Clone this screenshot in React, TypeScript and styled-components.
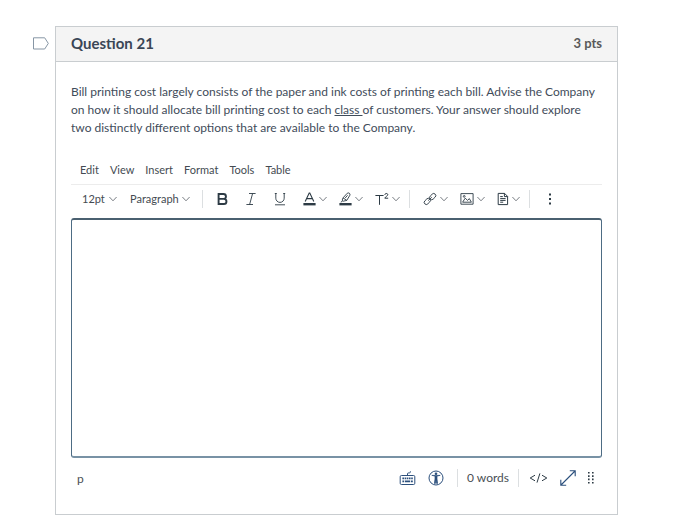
import React from "react";
import styled, { createGlobalStyle } from "styled-components";

const ink = "#2d3b45";
const blue = "#2b4f7c";
const line = "#c9cdd0";

const GlobalStyle = createGlobalStyle`
  *, *::before, *::after { box-sizing: border-box; }
  body {
    margin: 0;
    background: #fff;
    color: #3f4c5a;
    font-family: Lato, "Liberation Sans", sans-serif;
    font-size: 12px;
  }
  button, select, textarea { font: inherit; color: inherit; }
`;

const Page = styled.main`
  display: flex;
  align-items: flex-start;
  gap: 6px;
  padding: 26px 82px 8px 33px;
`;

const FlagButton = styled.button`
  display: flex;
  flex: none;
  margin: 11px 0 0;
  padding: 0;
  border: 0;
  background: none;
`;

const Card = styled.section`
  flex: 1;
  min-width: 0;
  border: 1px solid ${line};
`;

const CardHeader = styled.header`
  display: flex;
  align-items: center;
  justify-content: space-between;
  height: 35px;
  padding: 0 15px 2px;
  background: #f4f4f4;
  border-bottom: 1px solid ${line};
`;

const Title = styled.h2`
  margin: 0;
  font-size: 15px;
  line-height: 20px;
  font-weight: 700;
  color: #3a4656;
`;

const Points = styled.span`
  font-size: 13px;
  line-height: 20px;
  font-weight: 700;
  color: #595959;
`;

const CardBody = styled.div`
  padding: 21px 15px 19px;
`;

const Prompt = styled.p`
  margin: 0;
  line-height: 18px;
`;

const Editor = styled.div`
  margin-top: 22px;
`;

const MenuBar = styled.div`
  display: flex;
  align-items: center;
  gap: 11px;
  height: 26px;
  padding: 0 9px 4px;
  border-bottom: 1px solid #ececec;
`;

const MenuButton = styled.button`
  padding: 0;
  border: 0;
  background: none;
  font-size: 11px;
  line-height: 16px;
  color: #444b52;
`;

const Toolbar = styled.div`
  display: flex;
  align-items: center;
  height: 33px;
  padding: 0 0 5px 11px;
`;

const SelectField = styled.label<{ $width: number; $gap: number }>`
  display: grid;
  grid-template-columns: 1fr 8px;
  align-items: center;
  flex: none;
  width: ${(p) => p.$width}px;
  margin-right: ${(p) => p.$gap}px;
  color: #444b52;

  select {
    grid-area: 1 / 1 / 2 / 3;
    width: 100%;
    padding: 0;
    border: 0;
    background: none;
    appearance: none;
    font-size: 11px;
    line-height: 16px;
  }
  svg {
    grid-area: 1 / 2 / 2 / 3;
    pointer-events: none;
  }
`;

const Divider = styled.span`
  flex: none;
  width: 1px;
  height: 18px;
  background: #dcdfe1;
`;

const ToolGroup = styled.div<{ $gap: number; $before: number; $after: number }>`
  display: flex;
  align-items: center;
  gap: ${(p) => p.$gap}px;
  padding: 0 ${(p) => p.$after}px 0 ${(p) => p.$before}px;
`;

const ToolButton = styled.button`
  display: flex;
  align-items: center;
  gap: 3px;
  flex: none;
  padding: 0;
  border: 0;
  background: none;
  color: ${ink};
`;

const TextArea = styled.textarea`
  display: block;
  width: 100%;
  height: 240px;
  padding: 8px;
  border: 1px solid #4d6c84;
  border-top: 2px solid #4a6070;
  border-bottom: 2px solid #7892a5;
  border-radius: 3px;
  outline: none;
  resize: none;
  background: #fff;
`;

const StatusBar = styled.div`
  display: flex;
  align-items: center;
  justify-content: space-between;
  height: 34px;
  margin-top: 3px;
  padding: 0 8px 0 6px;
  color: #4a4f55;
`;

const StatusTools = styled.div`
  display: flex;
  align-items: center;
`;

const StatusButton = styled.button`
  display: flex;
  padding: 0;
  border: 0;
  background: none;
  color: ${blue};
`;

const WordCount = styled.button`
  padding: 0 9px;
  border: 0;
  background: none;
  line-height: 18px;
`;

const Chevron = () => (
  <svg width="8" height="6" viewBox="0 0 8 6" fill="none" stroke="#6b7177" strokeWidth="0.9" aria-hidden="true">
    <path d="M.4 1 4 4.8 7.6 1" />
  </svg>
);

const FlagIcon = () => (
  <svg width="16" height="13" viewBox="0 0 16 13" fill="none" stroke="#8796a5">
    <path d="M.5.8h11.2l3.6 5.6-3.6 5.6H.5z" />
  </svg>
);

const BoldIcon = () => (
  <svg width="11" height="14" viewBox="0 0 11 14" fill="none" stroke={ink} strokeWidth="1.9">
    <path d="M1.6 2h4.9a2.4 2.4 0 0 1 0 4.9H1.6M6.5 6.9h.4a2.5 2.5 0 0 1 0 5.1H1.6V1.1" />
  </svg>
);

const ItalicIcon = () => (
  <svg width="10" height="14" viewBox="0 0 10 14" fill="none" stroke={ink} strokeWidth="0.9">
    <path d="M3 1.5h6.6M.4 12.5H7M6.6 1.5l-3 11" />
  </svg>
);

const UnderlineIcon = () => (
  <svg width="12" height="14" viewBox="0 0 12 14" fill="none" stroke={ink} strokeWidth="0.9">
    <path d="M.8 1.5h2M9.2 1.5h2M1.8 1.5v4.7a4.2 4.2 0 0 0 8.4 0V1.5M1 12.8h10" />
  </svg>
);

const TextColorIcon = () => (
  <svg width="13" height="14" viewBox="0 0 13 14" fill="none" stroke={ink} strokeWidth="1.1">
    <path d="M2.2 9.6 6.2 1h.6l4 8.6M3.6 6.6h5.8" />
    <path d="M.4 11h12.2v2.4H.4z" fill={ink} stroke="none" />
  </svg>
);

const HighlightIcon = () => (
  <svg width="13" height="14" viewBox="0 0 13 14" fill="none" stroke={ink} strokeWidth="0.9">
    <path d="M4 5.9 8.2 1.3c1.2-1.1 3.5.2 2.7 1.9L7.8 8.4 4.2 9.2 3.2 8.2zM4 5.9l3.8 2.5M1.8 10.2l2-1.3M6 6.2l2.6-2.9" />
    <path d="M.4 11h12.2v2.4H.4z" fill={ink} stroke="none" />
  </svg>
);

const SuperscriptIcon = () => (
  <svg width="14" height="14" viewBox="0 0 14 14" fill="none" stroke={ink} strokeWidth="1">
    <path d="M.4 3.5h8.2M4.5 3.5v9.3" />
    <path d="M9.8 3c0-2 3-2 3-.3 0 1.2-2.6 2.1-3 3.5h3.4" />
  </svg>
);

const LinkIcon = () => (
  <svg width="14" height="14" viewBox="0 0 14 14" fill="none" stroke={ink} strokeWidth="0.9">
    <rect x="6.2" y="2.5" width="7" height="4.2" rx="2.1" transform="rotate(-45 9.7 4.6)" />
    <rect x=".8" y="7.3" width="7" height="4.2" rx="2.1" transform="rotate(-45 4.3 9.4)" />
    <path d="m5.2 8.6 3.6-3.4" />
  </svg>
);

const ImageIcon = () => (
  <svg width="14" height="14" viewBox="0 0 14 14" fill="none" stroke={ink} strokeWidth="0.9">
    <path d="M.9 1.6h12.2v10.6H.9z" />
    <path d="M2.6 10.2h8.8L9.3 6.6 7.6 8.4 5.2 6.2z" />
    <circle cx="4.2" cy="4.4" r=".9" />
  </svg>
);

const DocumentIcon = () => (
  <svg width="12" height="14" viewBox="0 0 12 14" fill="none" stroke={ink} strokeWidth="1">
    <path d="M1.2 1.4h6.4l3 3v8.2H1.2zM7.4 1.4v3.2h3.2M3.2 4.6h2.6M3.2 6.6h5.4M3.2 8.4h5.4M3.2 10.2h3" />
  </svg>
);

const MoreIcon = () => (
  <svg width="4" height="14" viewBox="0 0 4 14" fill={ink}>
    <path d="M1 1.6h2v2H1zM1 6h2v2H1zM1 10.4h2v2H1z" />
  </svg>
);

const KeyboardIcon = () => (
  <svg width="17" height="16" viewBox="0 0 17 16" fill="none" stroke={blue}>
    <rect x="1.2" y="5.5" width="14.6" height="9" rx="1.2" />
    <path d="M8.5 5.4V3.9c0-.7.4-1 1-1h1c.7 0 .9-.5.9-1.6" />
    <path d="M3.4 8.4h10.4" strokeWidth="1.7" strokeDasharray="1.6 .6" />
    <path d="M3.4 11.4h1.8M6 11.4h5M11.8 11.4h2" strokeWidth="1.7" />
  </svg>
);

const AccessibilityIcon = () => (
  <svg width="16" height="16" viewBox="0 0 16 16" fill="none" stroke={blue}>
    <circle cx="8" cy="8" r="7" />
    <circle cx="8" cy="3.8" r="1.3" fill={blue} stroke="none" />
    <path d="M3.8 5.4 7 6v3l-.6 4.4h1L8 10l.6 3.4h1L9 9V6l3.2-.6z" fill={blue} strokeWidth=".7" />
  </svg>
);

const CodeIcon = () => (
  <svg width="19" height="12" viewBox="0 0 19 12" fill="none" stroke={ink}>
    <path d="M6 3.2 1.2 6 6 8.8M13 3.2 17.8 6 13 8.8M10.9 1.4 8 10.6" />
  </svg>
);

const ExpandIcon = () => (
  <svg width="16" height="16" viewBox="0 0 16 16" fill="none" stroke={blue} strokeWidth="1.1">
    <path d="M1 15 15 1M9.8.8h5.4v5.4M.8 9.8v5.4h5.4" />
  </svg>
);

const GripIcon = () => (
  <svg width="6" height="14" viewBox="0 0 6 14" fill={ink}>
    {[1, 4.3, 7.6, 10.9].map((y) => (
      <path key={y} d={`M0 ${y}h1.6v1.6H0zM4 ${y}h1.6v1.6H4z`} />
    ))}
  </svg>
);

const menus = ["Edit", "View", "Insert", "Format", "Tools", "Table"];

const inlineTools = [
  { label: "Bold", Icon: BoldIcon },
  { label: "Italic", Icon: ItalicIcon },
  { label: "Underline", Icon: UnderlineIcon },
];

const styleTools = [
  { label: "Text color", Icon: TextColorIcon },
  { label: "Background color", Icon: HighlightIcon },
  { label: "Superscript and subscript", Icon: SuperscriptIcon },
];

const insertTools = [
  { label: "Links", Icon: LinkIcon },
  { label: "Images", Icon: ImageIcon },
  { label: "Documents", Icon: DocumentIcon },
];

export default function App() {
  return (
    <>
      <GlobalStyle />
      <Page>
        <FlagButton aria-label="Flag question">
          <FlagIcon />
        </FlagButton>
        <Card>
          <CardHeader>
            <Title>Question 21</Title>
            <Points>3 pts</Points>
          </CardHeader>
          <CardBody>
            <Prompt>
              Bill printing cost largely consists of the paper and ink costs of printing each bill. Advise the Company
              on how it should allocate bill printing cost to each <u>class </u>of customers. Your answer should explore
              two distinctly different options that are available to the Company.
            </Prompt>
            <Editor>
              <MenuBar role="menubar">
                {menus.map((name) => (
                  <MenuButton key={name} role="menuitem">
                    {name}
                  </MenuButton>
                ))}
              </MenuBar>
              <Toolbar role="toolbar">
                <SelectField $width={35} $gap={13}>
                  <select aria-label="Font size" defaultValue="12pt">
                    <option>12pt</option>
                  </select>
                  <Chevron />
                </SelectField>
                <SelectField $width={60} $gap={12}>
                  <select aria-label="Block style" defaultValue="Paragraph">
                    <option>Paragraph</option>
                  </select>
                  <Chevron />
                </SelectField>
                <Divider />
                <ToolGroup $gap={18} $before={14} $after={14}>
                  {inlineTools.map(({ label, Icon }) => (
                    <ToolButton key={label} aria-label={label}>
                      <Icon />
                    </ToolButton>
                  ))}
                </ToolGroup>
                <ToolGroup $gap={12} $before={3} $after={9}>
                  {styleTools.map(({ label, Icon }) => (
                    <ToolButton key={label} aria-label={label}>
                      <Icon />
                      <Chevron />
                    </ToolButton>
                  ))}
                </ToolGroup>
                <Divider />
                <ToolGroup $gap={12} $before={13} $after={9}>
                  {insertTools.map(({ label, Icon }) => (
                    <ToolButton key={label} aria-label={label}>
                      <Icon />
                      <Chevron />
                    </ToolButton>
                  ))}
                </ToolGroup>
                <Divider />
                <ToolGroup $gap={12} $before={18} $after={18}>
                  <ToolButton aria-label="More">
                    <MoreIcon />
                  </ToolButton>
                </ToolGroup>
              </Toolbar>
              <TextArea aria-label="Answer" />
              <StatusBar>
                <span>p</span>
                <StatusTools>
                  <ToolGroup $gap={12} $before={13} $after={13}>
                    <StatusButton aria-label="Keyboard shortcuts">
                      <KeyboardIcon />
                    </StatusButton>
                    <StatusButton aria-label="Accessibility checker">
                      <AccessibilityIcon />
                    </StatusButton>
                  </ToolGroup>
                  <Divider />
                  <WordCount>0 words</WordCount>
                  <Divider />
                  <ToolGroup $gap={12} $before={10} $after={0}>
                    <StatusButton aria-label="HTML editor">
                      <CodeIcon />
                    </StatusButton>
                    <StatusButton aria-label="Fullscreen">
                      <ExpandIcon />
                    </StatusButton>
                    <StatusButton aria-label="Resize">
                      <GripIcon />
                    </StatusButton>
                  </ToolGroup>
                </StatusTools>
              </StatusBar>
            </Editor>
          </CardBody>
        </Card>
      </Page>
    </>
  );
}
